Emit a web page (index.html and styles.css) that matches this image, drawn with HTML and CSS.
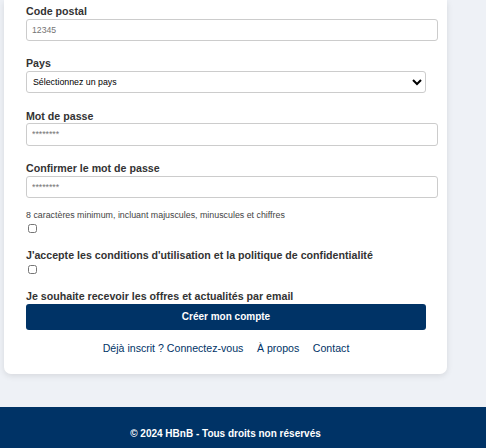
FILE: index.html
```html
<!DOCTYPE html>
<html lang="fr">
<head>
<meta charset="utf-8">
<title>Inscription - HBnB</title>
<link rel="stylesheet" href="styles.css">
</head>
<body>
<main class="page">
  <form class="card">
    <div class="group">
      <label class="label" for="cp">Code postal</label>
      <input class="field" id="cp" type="text" placeholder="12345">
    </div>
    <div class="group">
      <label class="label" for="pays">Pays</label>
      <select class="select" id="pays">
        <option>Sélectionnez un pays</option>
      </select>
    </div>
    <div class="group">
      <label class="label" for="pw">Mot de passe</label>
      <input class="field" id="pw" type="password" placeholder="********">
    </div>
    <div class="group">
      <label class="label" for="pw2">Confirmer le mot de passe</label>
      <input class="field" id="pw2" type="password" placeholder="********">
      <small class="hint">8 caractères minimum, incluant majuscules, minuscules et chiffres</small>
      <input class="check" type="checkbox">
    </div>
    <div class="group">
      <label class="label">J'accepte les conditions d'utilisation et la politique de confidentialité</label>
      <input class="check" type="checkbox">
    </div>
    <label class="label">Je souhaite recevoir les offres et actualités par email</label>
    <button class="btn" type="button">Créer mon compte</button>
    <nav class="links">
      <a href="#">Déjà inscrit ? Connectez-vous</a>
      <a href="#">À propos</a>
      <a href="#">Contact</a>
    </nav>
  </form>
</main>
<footer class="footer">
  <p class="footer-text">© 2024 HBnB - Tous droits non réservés</p>
</footer>
</body>
</html>
```
FILE: styles.css
```css
* { box-sizing: border-box; }

html, body {
  margin: 0;
  padding: 0;
}

body {
  background: #eef1f6;
  font-family: "Liberation Sans", Arial, sans-serif;
  color: #333;
}

.page {
  width: 451px;
  padding: 0 4px;
}

.card {
  background: #fff;
  border-radius: 0 0 7px 7px;
  box-shadow: 0 2px 6px rgba(0, 0, 0, 0.1);
  padding: 5px 21px 20px 22px;
  margin-bottom: 33px;
}

.group {
  margin-bottom: 16.5px;
}

.label {
  display: block;
  font-size: 10.65px;
  line-height: 12px;
  font-weight: bold;
  color: #333;
  margin-bottom: 1.5px;
}

.field {
  display: block;
  box-sizing: content-box;
  width: 100%;
  height: 20.4px;
  padding: 0 5px;
  border: 1px solid #ccc;
  border-radius: 3px;
  font-family: "Liberation Sans", Arial, sans-serif;
  font-size: 8.7px;
  color: #333;
  background: #fff;
}

.field::placeholder {
  color: #757575;
}

.select {
  display: block;
  width: 100%;
  height: 22.4px;
  padding: 0 2px;
  border: 1px solid #ccc;
  border-radius: 3px;
  font-family: "Liberation Sans", Arial, sans-serif;
  font-size: 8.8px;
  color: #000;
  background: #fff;
}

.hint {
  display: block;
  margin-top: 12px;
  font-size: 8.85px;
  line-height: 10px;
  color: #444;
}

.check {
  display: block;
  width: 9px;
  height: 9px;
  margin: 3.5px 0 0 2px;
}

.btn {
  display: block;
  width: 100%;
  height: 26px;
  border: 0;
  border-radius: 3px;
  background: #003366;
  color: #fff;
  font-family: "Liberation Sans", Arial, sans-serif;
  font-size: 10px;
  font-weight: bold;
}

.links {
  display: flex;
  justify-content: center;
  gap: 13.5px;
  margin-top: 12px;
  font-size: 10.6px;
  line-height: 12px;
}

.links a {
  color: #003366;
  text-decoration: none;
}

.footer {
  background: #003366;
  padding: 21px 0;
}

.footer-text {
  width: 451px;
  margin: 0;
  text-align: center;
  color: #fff;
  font-size: 10px;
  font-weight: bold;
  line-height: 12px;
}
```
